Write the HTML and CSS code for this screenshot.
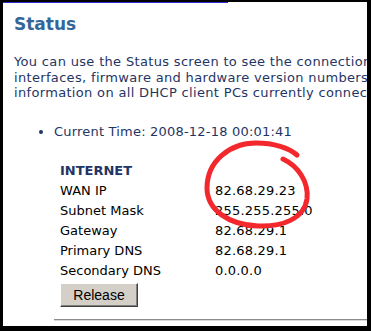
FILE: index.html
```html
<!DOCTYPE html>
<html lang="en">
<head>
  <title>Status</title>
  <meta charset="utf-8">
  <link rel="stylesheet" href="styles.css">
</head>
<body>
  <div class="frame">
    <div class="page">
      <div class="top-line"></div>
      <h1>Status</h1>
      <p class="intro">
        You can use the Status screen to see the connection status for the router's WAN/LAN<br>
        interfaces, firmware and hardware version numbers, any illegal attempts to access<br>
        information on all DHCP client PCs currently connected to your network.
      </p>
      <ul class="info">
        <li>Current Time: 2008-12-18 00:01:41</li>
      </ul>
      <div class="status">
        <div class="rows">
          <div class="group">INTERNET</div>
          <div class="label">WAN IP</div>
          <div class="value">82.68.29.23</div>
          <div class="label">Subnet Mask</div>
          <div class="value">255.255.255.0</div>
          <div class="label">Gateway</div>
          <div class="value">82.68.29.1</div>
          <div class="label">Primary DNS</div>
          <div class="value">82.68.29.1</div>
          <div class="label">Secondary DNS</div>
          <div class="value">0.0.0.0</div>
        </div>
        <button class="btn" type="button">Release</button>
        <div class="rule"></div>
      </div>
    </div>
    <svg class="scribble" width="371" height="331" viewBox="0 0 371 331">
      <path d="M283,159 C298,166 309,182 307,199 C304,219 282,227 258,226 C229,225 207,210 207,188 C207,161 230,143 256,143 C274,143 289,148 297,155"
            fill="none" stroke="#f2282d" stroke-width="5" stroke-linecap="round"/>
    </svg>
  </div>
</body>
</html>
```

FILE: styles.css
```css
*, *::before, *::after {
  box-sizing: border-box;
}

body {
  margin: 0;
  background-color: #000000;
  font-family: "DejaVu Sans", Verdana, sans-serif;
  font-size: 13px;
}

.frame {
  position: relative;
  width: 371px;
  height: 331px;
  padding: 2px 4px 5px 3px;
  background-color: #000000;
}

.page {
  height: 100%;
  padding-left: 11px;
  background-color: #FFFFFF;
  overflow: hidden;
}

.top-line {
  width: 225px;
  height: 1px;
  margin-left: -11px;
  background-color: #2b2bd0;
}

h1 {
  margin: 11px 0 0;
  font-size: 17px;
  line-height: 20px;
  font-weight: bold;
  color: #336699;
}

.intro {
  margin: 20px 0 0;
  line-height: 15.6px;
  letter-spacing: 0.33px;
  color: #1f3564;
  white-space: nowrap;
}

.info {
  margin: 23px 0 0;
  padding-left: 40px;
  line-height: 15.6px;
  letter-spacing: 0.2px;
  color: #1f3564;
}

.status {
  margin: 22px 0 0 40px;
}

.rows {
  display: grid;
  grid-template-columns: 155px auto;
  padding-left: 6px;
  line-height: 20px;
  color: #000000;
}

.value {
  letter-spacing: 0.2px;
}

.group {
  grid-column: 1 / 3;
  font-weight: bold;
  color: #1f3564;
}

.btn {
  display: block;
  width: 78px;
  height: 24px;
  margin: 2px 0 0 6px;
  padding: 0;
  border: 1px solid;
  border-color: #FFFFFF #404040 #404040 #FFFFFF;
  box-shadow: inset -1px -1px #808080;
  background-color: #d4d0c8;
  font-family: "Liberation Sans", Arial, sans-serif;
  font-size: 14px;
  color: #000000;
}

.rule {
  height: 2px;
  margin-top: 12px;
  border-top: 1px solid #8c8c8c;
  border-bottom: 1px solid #d8d8d8;
}

.scribble {
  position: absolute;
  top: 0;
  left: 0;
  pointer-events: none;
}
```
